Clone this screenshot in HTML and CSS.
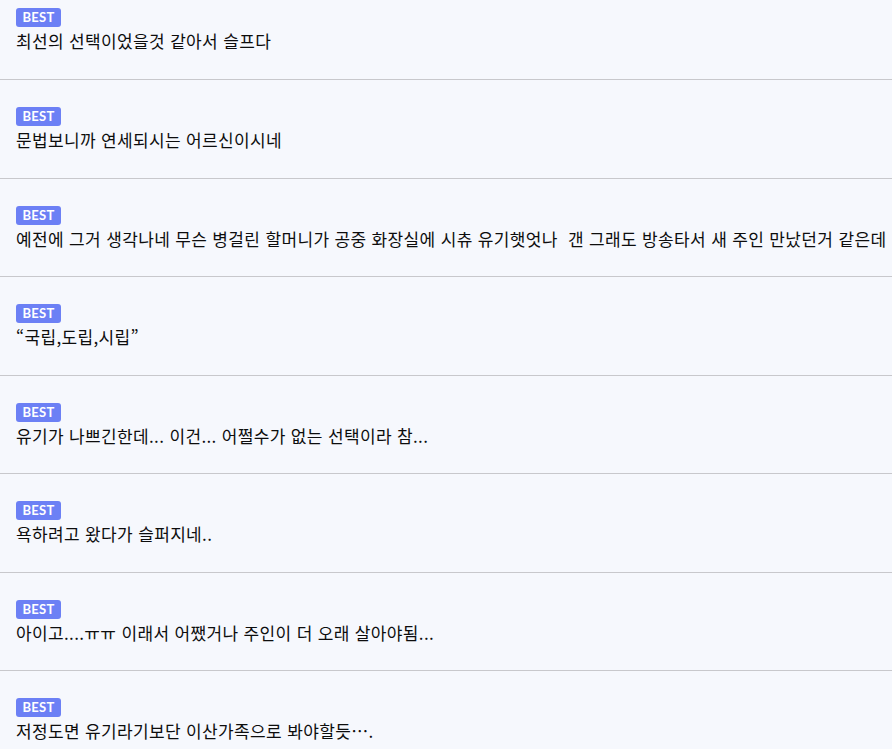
FILE: index.html
```html
<!DOCTYPE html>
<html lang="ko">
<head>
<meta charset="utf-8">
<link rel="stylesheet" href="styles.css">
</head>
<body>
<ul class="list">
  <li class="item"><span class="badge">BEST</span><p class="text">최선의 선택이었을것 같아서 슬프다</p></li>
  <li class="item"><span class="badge">BEST</span><p class="text">문법보니까 연세되시는 어르신이시네</p></li>
  <li class="item"><span class="badge">BEST</span><p class="text">예전에 그거 생각나네 무슨 병걸린 할머니가 공중 화장실에 시츄 유기햇엇나&nbsp; 갠 그래도 방송타서 새 주인 만났던거 같은데</p></li>
  <li class="item"><span class="badge">BEST</span><p class="text">“국립,도립,시립”</p></li>
  <li class="item"><span class="badge">BEST</span><p class="text">유기가 나쁘긴한데... 이건... 어쩔수가 없는 선택이라 참...</p></li>
  <li class="item"><span class="badge">BEST</span><p class="text">욕하려고 왔다가 슬퍼지네..</p></li>
  <li class="item"><span class="badge">BEST</span><p class="text">아이고....ㅠㅠ 이래서 어쨌거나 주인이 더 오래 살아야됨...</p></li>
  <li class="item"><span class="badge">BEST</span><p class="text">저정도면 유기라기보단 이산가족으로 봐야할듯….</p></li>
</ul>
</body>
</html>
```
FILE: styles.css
```css
html, body {
  margin: 0;
  padding: 0;
  background: #f6f8fd;
}
body {
  font-family: "Noto Sans CJK KR", "Noto Sans", sans-serif;
  color: #111;
  overflow: hidden;
  height: 749px;
}
.list {
  list-style: none;
  margin: -20px 0 0 0;
  padding: 0;
}
.item {
  display: flex;
  flex-direction: column;
  align-items: flex-start;
  padding: 27px 16px 0;
  height: 98.5px;
  box-sizing: border-box;
  border-bottom: 1px solid #c8c8cc;
}
.item:first-child {
  height: 100px;
  padding-top: 28px;
}
.badge {
  display: inline-flex;
  align-items: center;
  justify-content: center;
  width: 45px;
  height: 19px;
  border-radius: 3px;
  background: #6c80f5;
  color: #fff;
  font-family: Lato, "Noto Sans", sans-serif;
  font-weight: 700;
  font-size: 13px;
  letter-spacing: 0.3px;
  line-height: 1;
}
.text {
  margin: 2px 0 0;
  font-size: 17px;
  line-height: 24px;
  letter-spacing: 0.35px;
  font-weight: 400;
  color: #0d0d0d;
  white-space: nowrap;
}
```
